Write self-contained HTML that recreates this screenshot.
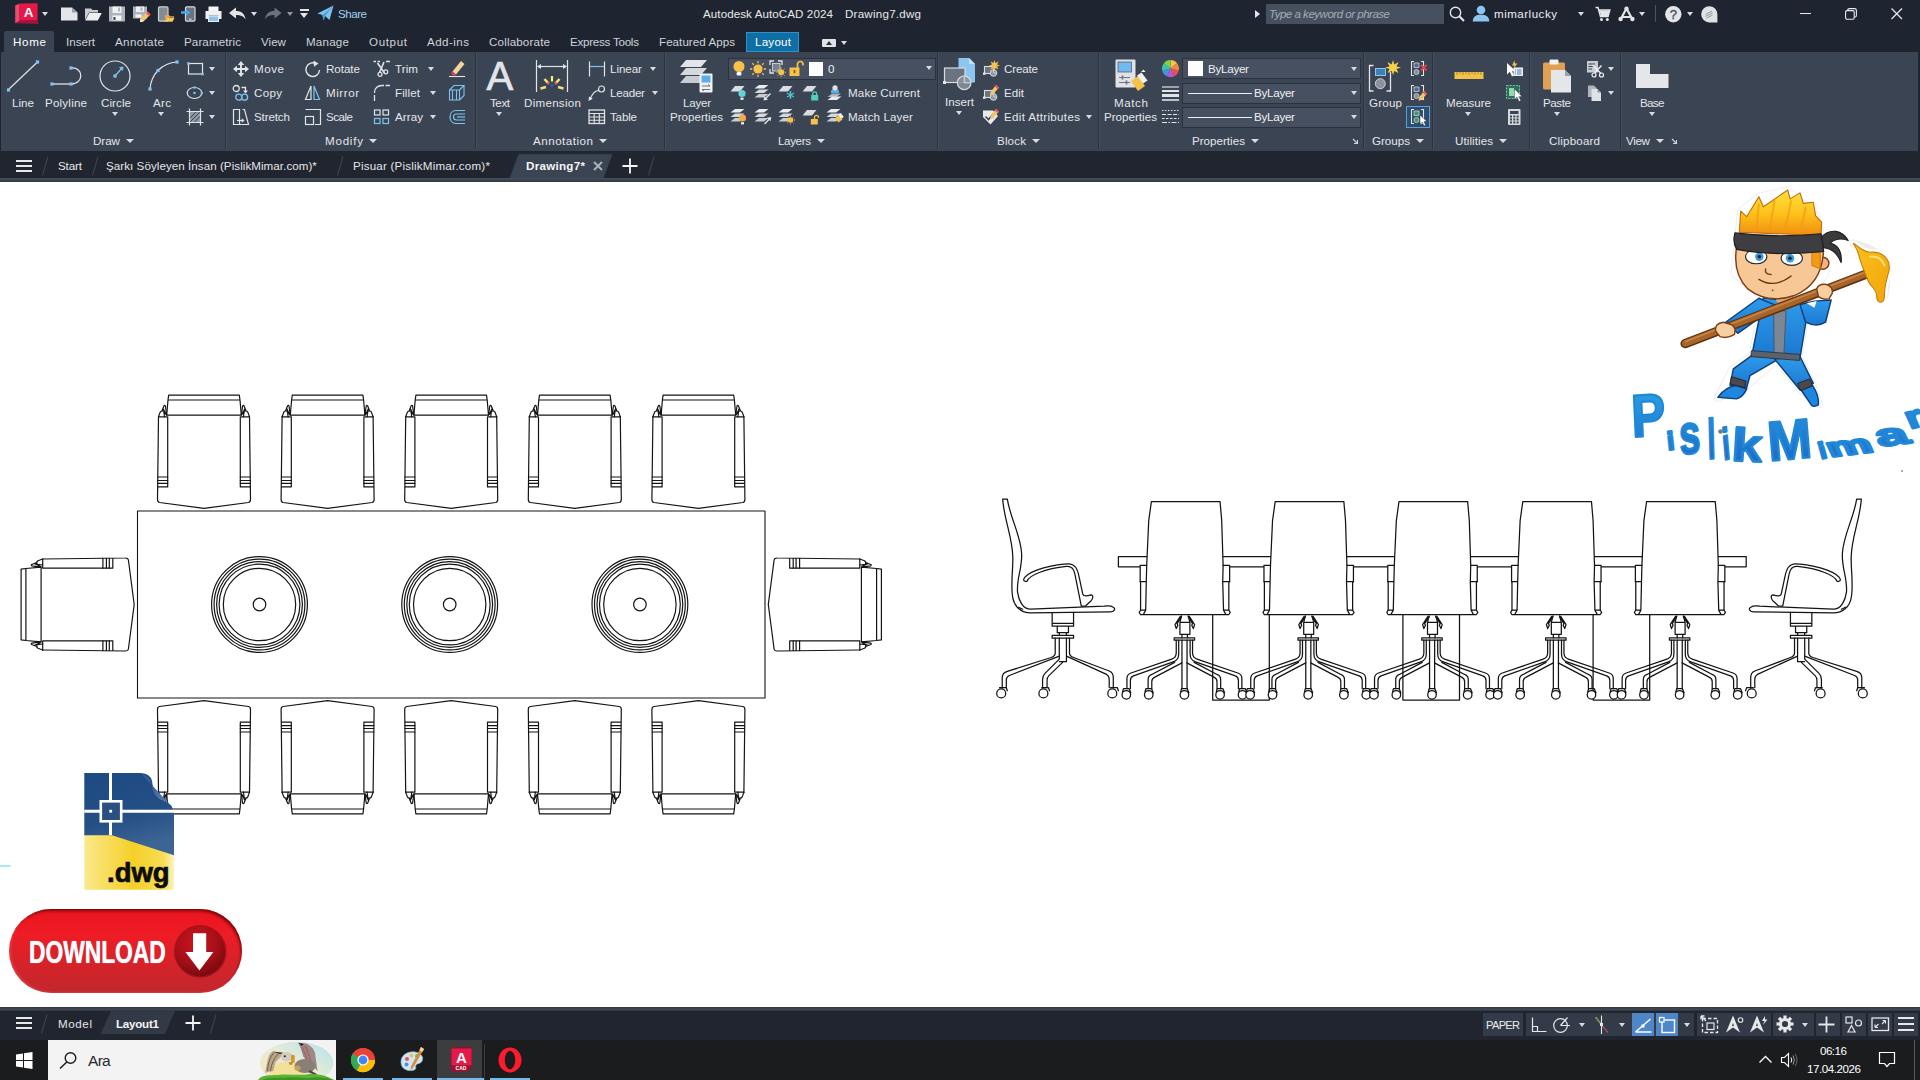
<!DOCTYPE html>
<html lang="en">
<head>
<meta charset="utf-8">
<title>Autodesk AutoCAD 2024 - Drawing7.dwg</title>
<style>
html,body{margin:0;padding:0}
body{width:1920px;height:1080px;overflow:hidden;background:#fff;position:relative;font-family:"Liberation Sans",sans-serif;font-size:12px;color:#e4e6ea}
.b{position:absolute}
.t{position:absolute;white-space:nowrap;line-height:16px;font-size:12px}
.i{position:absolute;overflow:visible}
.a{position:absolute;width:0;height:0;border-left:3.5px solid transparent;border-right:3.5px solid transparent;border-top:4px solid #d8dce2}
.sep{position:absolute;top:53px;width:1px;height:96px;background:#2a313d;box-shadow:1px 0 0 #454e5e}
.dd{position:absolute;background:#475060;border:1px solid #2b323e;box-sizing:border-box}
</style>
</head>
<body>
<div class="b" style="left:0;top:0;width:1920px;height:52px;background:#1f2530"></div>
<div class="b" style="left:0;top:52px;width:1920px;height:100px;background:#1f2530"></div>
<div class="b" style="left:1px;top:52px;width:1917px;height:99px;background:#3b4453"></div>
<div class="b" style="left:0;top:151px;width:1920px;height:27px;background:#20252f"></div>
<div class="b" style="left:0;top:178px;width:1920px;height:4px;background:linear-gradient(#47515c,#3b4550 50%,#2f3843)"></div>
<div class="b" style="left:0;top:1007px;width:1920px;height:4px;background:linear-gradient(#2c343e,#414953 55%,#2c343e)"></div>
<div class="b" style="left:0;top:1011px;width:1920px;height:29px;background:#20252f"></div>
<div class="b" style="left:0;top:1040px;width:1920px;height:40px;background:#1b1c1e"></div>
<div class="b" style="left:4px;top:31px;width:50px;height:21px;background:#3b4453;border-radius:2px 2px 0 0"></div>
<div class="b" style="left:746px;top:32px;width:53px;height:20px;background:#0f6ea3;border:1px solid #2a93cc;box-sizing:border-box"></div>
<span class="t" style="left:13.00px;top:34px;font-size:11.6px;letter-spacing:0.676px;color:#ffffff;">Home</span>
<span class="t" style="left:66.00px;top:34px;font-size:11.6px;letter-spacing:0.000px;color:#cfd3da;">Insert</span>
<span class="t" style="left:115.00px;top:34px;font-size:11.6px;letter-spacing:0.363px;color:#cfd3da;">Annotate</span>
<span class="t" style="left:184.00px;top:34px;font-size:11.6px;letter-spacing:0.102px;color:#cfd3da;">Parametric</span>
<span class="t" style="left:261.00px;top:34px;font-size:11.6px;letter-spacing:0.020px;color:#cfd3da;">View</span>
<span class="t" style="left:306.00px;top:34px;font-size:11.6px;letter-spacing:0.213px;color:#cfd3da;">Manage</span>
<span class="t" style="left:369.00px;top:34px;font-size:11.6px;letter-spacing:0.640px;color:#cfd3da;">Output</span>
<span class="t" style="left:427.00px;top:34px;font-size:11.6px;letter-spacing:0.446px;color:#cfd3da;">Add-ins</span>
<span class="t" style="left:489.00px;top:34px;font-size:11.6px;letter-spacing:0.167px;color:#cfd3da;">Collaborate</span>
<span class="t" style="left:570.00px;top:34px;font-size:11.6px;letter-spacing:-0.248px;color:#cfd3da;">Express Tools</span>
<span class="t" style="left:659.00px;top:34px;font-size:11.6px;letter-spacing:0.045px;color:#cfd3da;">Featured Apps</span>
<span class="t" style="left:755.00px;top:34px;font-size:11.6px;letter-spacing:0.228px;color:#ffffff;">Layout</span>
<div class="b" style="left:822px;top:39px;width:14px;height:8px;background:#dfe2e6;border-radius:1px"></div>
<i class="a" style="left:826px;top:41px;border-top:0;border-bottom:4px solid #2a303b;border-left-width:3px;border-right-width:3px"></i>
<i class="a" style="left:840.5px;top:41px;border-top-color:#d8dce2"></i>
<div class="sep" style="left:225px"></div>
<div class="sep" style="left:475px"></div>
<div class="sep" style="left:664px"></div>
<div class="sep" style="left:937px"></div>
<div class="sep" style="left:1098px"></div>
<div class="sep" style="left:1363px"></div>
<div class="sep" style="left:1432px"></div>
<div class="sep" style="left:1529px"></div>
<div class="sep" style="left:1620px"></div>
<span class="t" style="left:93.00px;top:133px;font-size:11.6px;letter-spacing:-0.029px;">Draw</span>
<i class="a" style="left:126px;top:139px;border-left-width:4px;border-right-width:4px;border-top-width:4.5px"></i>
<span class="t" style="left:325.00px;top:133px;font-size:11.6px;letter-spacing:0.768px;">Modify</span>
<i class="a" style="left:369px;top:139px;border-left-width:4px;border-right-width:4px;border-top-width:4.5px"></i>
<span class="t" style="left:533.00px;top:133px;font-size:11.6px;letter-spacing:0.506px;">Annotation</span>
<i class="a" style="left:599px;top:139px;border-left-width:4px;border-right-width:4px;border-top-width:4.5px"></i>
<span class="t" style="left:778.00px;top:133px;font-size:11.6px;letter-spacing:-0.360px;">Layers</span>
<i class="a" style="left:817px;top:139px;border-left-width:4px;border-right-width:4px;border-top-width:4.5px"></i>
<span class="t" style="left:997.00px;top:133px;font-size:11.6px;letter-spacing:0.145px;">Block</span>
<i class="a" style="left:1032px;top:139px;border-left-width:4px;border-right-width:4px;border-top-width:4.5px"></i>
<span class="t" style="left:1192.00px;top:133px;font-size:11.6px;letter-spacing:0.012px;">Properties</span>
<i class="a" style="left:1251px;top:139px;border-left-width:4px;border-right-width:4px;border-top-width:4.5px"></i>
<span class="t" style="left:1372.00px;top:133px;font-size:11.6px;letter-spacing:-0.010px;">Groups</span>
<i class="a" style="left:1416px;top:139px;border-left-width:4px;border-right-width:4px;border-top-width:4.5px"></i>
<span class="t" style="left:1455.00px;top:133px;font-size:11.6px;letter-spacing:0.074px;">Utilities</span>
<i class="a" style="left:1499px;top:139px;border-left-width:4px;border-right-width:4px;border-top-width:4.5px"></i>
<span class="t" style="left:1549.00px;top:133px;font-size:11.6px;letter-spacing:0.169px;">Clipboard</span>
<span class="t" style="left:1626.00px;top:133px;font-size:11.6px;letter-spacing:-0.313px;">View</span>
<i class="a" style="left:1656px;top:139px;border-left-width:4px;border-right-width:4px;border-top-width:4.5px"></i>
<svg class="i" style="left:1352px;top:138px" width="7" height="7" viewBox="0 0 7 7" ><path d="M1 1L5.5 5.5M5.5 2V5.5H2" fill="none" stroke="#cfd3da" stroke-width="1.1"/></svg>
<svg class="i" style="left:1671px;top:138px" width="7" height="7" viewBox="0 0 7 7" ><path d="M1 1L5.5 5.5M5.5 2V5.5H2" fill="none" stroke="#cfd3da" stroke-width="1.1"/></svg>
<svg class="i" style="left:14px;top:2px" width="26" height="23" viewBox="0 0 26 23" ><path d="M1.2 21.2L5.6 18.3L23.4 18L25 22Z" fill="#a8113a"/>
<path d="M1.2 3.6L5.6 1.5V18.5L1.2 21.2Z" fill="#ef4a6e"/>
<path d="M5.6 1.5L23.2 1.2Q23.6 1.2 23.6 1.8V18L5.6 18.5Z" fill="#e6174a"/>
<text x="14.5" y="14.8" font-family="Liberation Sans, sans-serif" font-weight="bold" font-size="13.5" fill="#fff" text-anchor="middle">A</text></svg>
<i class="a" style="left:42px;top:12px;border-top-color:#d8dce2"></i>
<svg class="i" style="left:61px;top:7px" width="17" height="14" viewBox="0 0 17 14" ><path d="M0 0.5H11L16.5 5.5V13.5H0Z" fill="#e3e5e8"/><path d="M11 0.5V5.5H16.5Z" fill="#9aa1ab"/></svg>
<svg class="i" style="left:85px;top:7px" width="17" height="14" viewBox="0 0 17 14" ><path d="M0 1.5H6L7.5 3H13V5.5H4L0 13Z" fill="#c9cdd3"/><path d="M4.2 6H16.8L12.8 13.5H0.3Z" fill="#eceef0"/></svg>
<svg class="i" style="left:109px;top:6px" width="17" height="16" viewBox="0 0 17 16" ><path d="M0 0.5H16V15.5H0Z" fill="#aeb4bd"/><rect x="3.5" y="0.5" width="9" height="6.5" fill="#eef0f2"/><rect x="9" y="1.5" width="2" height="4" fill="#aeb4bd"/><rect x="3.5" y="9.5" width="9" height="5" fill="#f4f5f6"/><rect x="4.5" y="11" width="2" height="3" fill="#3b4453"/></svg>
<svg class="i" style="left:133px;top:6px" width="18" height="16" viewBox="0 0 18 16" ><path d="M0 0.5H14V12.5H0Z" fill="#aeb4bd"/><rect x="3" y="0.5" width="8" height="5.5" fill="#eef0f2"/><rect x="7.5" y="1.5" width="2" height="3.5" fill="#aeb4bd"/><rect x="2.5" y="8.5" width="6" height="3" fill="#f4f5f6"/><path d="M14.5 5.5L17.5 8.5L10.5 15.5L7 16L7.6 12.5Z" fill="#f3c56b"/><path d="M14.5 5.5L17.5 8.5L16 10L13 7Z" fill="#e8505b"/><path d="M7 16L7.6 12.5L10.5 15.5Z" fill="#f1f1f1"/></svg>
<svg class="i" style="left:157px;top:6px" width="18" height="16" viewBox="0 0 18 16" ><rect x="1.5" y="0.8" width="9.5" height="14.4" rx="1.2" fill="#858b94" stroke="#c9cdd3" stroke-width="1.2"/><path d="M8 9H12L13 10.2H17V11.5H10.5L8 15.5Z" fill="#e0a93e"/><path d="M10.3 11.8H17.6L15.5 15.8H8Z" fill="#f6c560"/></svg>
<svg class="i" style="left:181px;top:6px" width="16" height="16" viewBox="0 0 16 16" ><rect x="4.5" y="0.8" width="9.5" height="14.4" rx="1.2" fill="#6c7380" stroke="#d5d8dd" stroke-width="1.2"/><rect x="8" y="12.6" width="2.5" height="1.2" fill="#d5d8dd"/><path d="M0 5.2H5V3L9.5 6.5L5 10V7.8H0Z" fill="#46a7e6"/></svg>
<svg class="i" style="left:205px;top:6px" width="17" height="16" viewBox="0 0 17 16" ><rect x="3.5" y="0.5" width="10" height="5" fill="#f4f5f6"/><path d="M0.5 5H16.5V13H13.5V9.5H3.5V13H0.5Z" fill="#eef0f2"/><rect x="3.5" y="10" width="10" height="5.5" fill="#8fc2ea" stroke="#eef0f2" stroke-width="1"/></svg>
<svg class="i" style="left:229px;top:7px" width="17" height="14" viewBox="0 0 17 14" ><path d="M0 6L7 0.5V4C12 4 16 6.5 16.5 12.5C14.5 9 11.5 8 7 8V11.5Z" fill="#e3e5e8"/></svg>
<i class="a" style="left:250.5px;top:12px;border-top-color:#d8dce2"></i>
<svg class="i" style="left:265px;top:7px" width="17" height="14" viewBox="0 0 17 14" ><path d="M16.5 6L9.5 0.5V4C4.5 4 0.5 6.5 0 12.5C2 9 5 8 9.5 8V11.5Z" fill="#6b7380"/></svg>
<i class="a" style="left:286.5px;top:12px;border-top-color:#8e959f"></i>
<div class="b" style="left:300px;top:9px;width:9px;height:2px;background:#e3e5e8"></div>
<i class="a" style="left:300px;top:13px;border-left-width:4.5px;border-right-width:4.5px;border-top-width:5px;border-top-color:#e3e5e8"></i>
<svg class="i" style="left:317px;top:5px" width="17" height="17" viewBox="0 0 17 17" ><path d="M0.5 8.5L16.5 0.5L12.5 15L8 11L6.5 15.5L5.5 10Z" fill="#7fc4ef"/><path d="M5.5 10L16.5 0.5L8 11L6.5 15.5Z" fill="#4b9fd6"/></svg>
<span class="t" style="left:338.00px;top:6px;font-size:11.6px;letter-spacing:-0.493px;color:#9fd0f0;">Share</span>
<span class="t" style="left:703.00px;top:6px;font-size:11.6px;letter-spacing:0.082px;color:#e6e8ea;">Autodesk AutoCAD 2024</span>
<span class="t" style="left:845.00px;top:6px;font-size:11.6px;letter-spacing:0.229px;color:#e6e8ea;">Drawing7.dwg</span>
<i class="a" style="left:1255px;top:10px;border:0;border-top:4px solid transparent;border-bottom:4px solid transparent;border-left:5px solid #e3e5e8"></i>
<div class="b" style="left:1266px;top:4px;width:178px;height:20px;background:#47505f"></div>
<span class="t" style="left:1269.00px;top:7px;font-size:11.5px;line-height:15.5px;letter-spacing:-0.482px;font-style:italic;color:#a3abb7;">Type a keyword or phrase</span>
<svg class="i" style="left:1449px;top:6px" width="16" height="16" viewBox="0 0 16 16" ><circle cx="6.5" cy="6.5" r="5.2" fill="none" stroke="#e3e5e8" stroke-width="1.4"/><path d="M10.3 10.3L15 15" stroke="#e3e5e8" stroke-width="2"/></svg>
<svg class="i" style="left:1472px;top:5px" width="18" height="17" viewBox="0 0 18 17" ><circle cx="9" cy="5" r="4.3" fill="#8cc6f0"/><path d="M0.8 16.5C0.8 11.5 4 9.8 9 9.8S17.2 11.5 17.2 16.5Z" fill="#8cc6f0"/></svg>
<span class="t" style="left:1494.00px;top:6px;font-size:11.6px;letter-spacing:0.485px;color:#eceef0;">mimarlucky</span>
<i class="a" style="left:1578px;top:12px;border-top-color:#d8dce2"></i>
<svg class="i" style="left:1595px;top:6px" width="16" height="16" viewBox="0 0 16 16" ><path d="M0.5 1.5H3L5.5 10.5H13L14.8 4H4" fill="none" stroke="#e3e5e8" stroke-width="1.5"/><path d="M4.5 4.5H14.5L13 10H6Z" fill="#e3e5e8"/><circle cx="6.5" cy="13.6" r="1.5" fill="#e3e5e8"/><circle cx="12.3" cy="13.6" r="1.5" fill="#e3e5e8"/></svg>
<svg class="i" style="left:1618px;top:6px" width="17" height="16" viewBox="0 0 17 16" ><path d="M8.5 2.5L2.5 13.5M8.5 2.5L14.5 13.5M4 11H13" fill="none" stroke="#e3e5e8" stroke-width="2.2"/><circle cx="8.5" cy="2.8" r="2.2" fill="#e3e5e8"/><circle cx="2.6" cy="13" r="2.2" fill="#e3e5e8"/><circle cx="14.4" cy="13" r="2.2" fill="#e3e5e8"/></svg>
<i class="a" style="left:1638.5px;top:12px;border-top-color:#d8dce2"></i>
<div class="b" style="left:1655px;top:5px;width:1px;height:17px;background:#4d5564"></div>
<svg class="i" style="left:1665px;top:6px" width="17" height="17" viewBox="0 0 17 17" ><circle cx="8.3" cy="8.3" r="8.2" fill="#e3e5e8"/><text x="8.3" y="13" font-family="Liberation Sans, sans-serif" font-size="13" text-anchor="middle" fill="#4a5260" stroke="#4a5260" stroke-width="0.4">?</text></svg>
<i class="a" style="left:1686.5px;top:12px;border-top-color:#d8dce2"></i>
<svg class="i" style="left:1701px;top:6px" width="17" height="17" viewBox="0 0 17 17" ><path d="M8.3 0.2A8.1 8.1 0 1 0 8.3 16.4H16.4V8.3A8.1 8.1 0 0 0 8.3 0.2Z" fill="#dfe2e5"/><path d="M4.5 8.5L11 5M4.5 10.5L11.5 6.8M5.5 12.2L11.5 9" stroke="#8b929c" stroke-width="0.9"/></svg>
<div class="b" style="left:1800px;top:13px;width:11px;height:1px;background:#e9ebee"></div>
<svg class="i" style="left:1845px;top:8px" width="12" height="12" viewBox="0 0 12 12" ><rect x="0.6" y="2.6" width="8.6" height="8.6" rx="1.5" fill="none" stroke="#e9ebee" stroke-width="1.1"/><path d="M2.8 2.4V2Q2.8 0.6 4.2 0.6H9.6Q11.4 0.6 11.4 2.4V7.6Q11.4 9.2 9.8 9.2H9.4" fill="none" stroke="#e9ebee" stroke-width="1.1"/></svg>
<svg class="i" style="left:1891px;top:8px" width="12" height="12" viewBox="0 0 12 12" ><path d="M0.5 0.5L11 11M11 0.5L0.5 11" stroke="#e9ebee" stroke-width="1.2"/></svg>
<svg class="i" style="left:0px;top:52px" width="48" height="50" viewBox="0 0 48 50" ><path d="M8.5 37.5L37 10.5" stroke="#e1e4e8" stroke-width="1.2"/><rect x="6.9" y="36.4" width="3.2" height="3.2" fill="#7cc4ee"/><rect x="35.9" y="8.4" width="3.2" height="3.2" fill="#7cc4ee"/></svg>
<span class="t" style="left:12.00px;top:95px;font-size:11.6px;letter-spacing:0.025px;">Line</span>
<svg class="i" style="left:40px;top:52px" width="50" height="50" viewBox="0 0 50 50" ><path d="M12 32H31" stroke="#e1e4e8" stroke-width="1.3"/><path d="M31 16C44 15 44 32 31 32" fill="none" stroke="#e1e4e8" stroke-width="1.3"/><rect x="10.4" y="30.4" width="3.2" height="3.2" fill="#7cc4ee"/><rect x="29.4" y="30.4" width="3.2" height="3.2" fill="#7cc4ee"/><rect x="29.4" y="14.4" width="3.2" height="3.2" fill="#7cc4ee"/></svg>
<span class="t" style="left:45.00px;top:95px;font-size:11.6px;letter-spacing:0.200px;">Polyline</span>
<svg class="i" style="left:95px;top:52px" width="40" height="50" viewBox="0 0 40 50" ><circle cx="20" cy="24" r="15" fill="none" stroke="#e1e4e8" stroke-width="1.2"/><path d="M20 24L27 16" stroke="#7cc4ee" stroke-width="1.3"/><path d="M28.5 14.5L27.8 19L24 15.2Z" fill="#7cc4ee"/><rect x="18.4" y="22.4" width="3.2" height="3.2" fill="#7cc4ee"/></svg>
<span class="t" style="left:101.00px;top:95px;font-size:11.6px;letter-spacing:0.072px;">Circle</span>
<i class="a" style="left:111.5px;top:112px;border-top-color:#d8dce2"></i>
<svg class="i" style="left:140px;top:52px" width="45" height="50" viewBox="0 0 45 50" ><path d="M10 37C11 22 22 11 37 10" fill="none" stroke="#e1e4e8" stroke-width="1.2"/><rect x="8.4" y="35.4" width="3.2" height="3.2" fill="#7cc4ee"/><rect x="16.4" y="16.9" width="3.2" height="3.2" fill="#7cc4ee"/><rect x="35.4" y="8.4" width="3.2" height="3.2" fill="#7cc4ee"/></svg>
<span class="t" style="left:153.00px;top:95px;font-size:11.6px;letter-spacing:0.300px;">Arc</span>
<i class="a" style="left:157.5px;top:112px;border-top-color:#d8dce2"></i>
<svg class="i" style="left:187px;top:61px" width="18" height="16" viewBox="0 0 18 16" ><rect x="1.5" y="2.5" width="14" height="10.5" fill="none" stroke="#e1e4e8" stroke-width="1.2"/><rect x="0.2" y="1.2" width="2.6" height="2.6" fill="#7cc4ee"/><rect x="14.2" y="11.7" width="2.6" height="2.6" fill="#7cc4ee"/></svg>
<i class="a" style="left:209px;top:67px;border-top-color:#d8dce2"></i>
<svg class="i" style="left:186px;top:85px" width="18" height="16" viewBox="0 0 18 16" ><ellipse cx="8.5" cy="8" rx="7.3" ry="5.5" fill="none" stroke="#e1e4e8" stroke-width="1.2"/><rect x="7.4" y="6.9" width="2.2" height="2.2" fill="#7cc4ee"/><rect x="7.4" y="1.4" width="2.2" height="2.2" fill="#7cc4ee"/><rect x="14.7" y="6.9" width="2.2" height="2.2" fill="#7cc4ee"/></svg>
<i class="a" style="left:209px;top:91px;border-top-color:#d8dce2"></i>
<svg class="i" style="left:186px;top:108px" width="18" height="18" viewBox="0 0 18 18" ><rect x="3.5" y="3.5" width="11" height="11" fill="#8d96a3"/><path d="M4 10L10 4M4 14L14 4M8 14.5L14.5 8" stroke="#3b4453" stroke-width="1"/><path d="M3.5 0.5V17.5M14.5 0.5V17.5M0.5 3.5H17.5M0.5 14.5H17.5" stroke="#e1e4e8" stroke-width="1.2"/></svg>
<i class="a" style="left:209px;top:115px;border-top-color:#d8dce2"></i>
<svg class="i" style="left:232.5px;top:60.5px" width="17" height="17" viewBox="0 0 17 17" ><path d="M8 2V14M2 8H14" stroke="#e1e4e8" stroke-width="1.9"/><path d="M8 0L11.2 4H4.8ZM8 16L11.2 12H4.8ZM0 8L4 4.8V11.2ZM16 8L12 4.8V11.2Z" fill="#e1e4e8"/></svg>
<span class="t" style="left:254.00px;top:61px;font-size:11.6px;letter-spacing:0.546px;">Move</span>
<svg class="i" style="left:232px;top:84px" width="18" height="18" viewBox="0 0 18 18" ><circle cx="4.2" cy="4.5" r="3" fill="none" stroke="#e1e4e8" stroke-width="1.3"/><path d="M9.5 3.5H13.5V7" fill="none" stroke="#e1e4e8" stroke-width="1.3"/><path d="M13.5 9.5L11 6.5H16Z" fill="#e1e4e8"/><circle cx="6.8" cy="13.2" r="3" fill="none" stroke="#7cc4ee" stroke-width="1.3"/><circle cx="12.6" cy="13.2" r="3" fill="none" stroke="#7cc4ee" stroke-width="1.3"/></svg>
<span class="t" style="left:254.00px;top:85px;font-size:11.6px;letter-spacing:0.305px;">Copy</span>
<svg class="i" style="left:232px;top:108px" width="18" height="18" viewBox="0 0 18 18" ><path d="M1.5 1.5H7.5V16.5H1.5Z" fill="none" stroke="#e1e4e8" stroke-width="1.2"/><path d="M10.5 1.5H12.5L16.5 16.5H7.5" fill="none" stroke="#e1e4e8" stroke-width="1.2"/><path d="M5 12.5H11" stroke="#e1e4e8" stroke-width="1.2"/><path d="M12.5 12.5L9.8 10.3V14.7Z" fill="#e1e4e8"/></svg>
<span class="t" style="left:254.00px;top:109px;font-size:11.6px;letter-spacing:-0.129px;">Stretch</span>
<svg class="i" style="left:304px;top:60px" width="18" height="18" viewBox="0 0 18 18" ><path d="M12.5 4A6.8 6.8 0 1 0 15.5 10" fill="none" stroke="#e1e4e8" stroke-width="1.4"/><path d="M9.5 0.5L14.5 3.5L10 6.8Z" fill="#e1e4e8"/></svg>
<span class="t" style="left:326.00px;top:61px;font-size:11.6px;letter-spacing:-0.032px;">Rotate</span>
<svg class="i" style="left:304px;top:84px" width="18" height="18" viewBox="0 0 18 18" ><path d="M7 2V15.5H1.5Z" fill="none" stroke="#e1e4e8" stroke-width="1.2"/><path d="M10 2V15.5H15.5Z" fill="none" stroke="#7cc4ee" stroke-width="1.2"/></svg>
<span class="t" style="left:326.00px;top:85px;font-size:11.6px;letter-spacing:0.545px;">Mirror</span>
<svg class="i" style="left:304px;top:108px" width="18" height="18" viewBox="0 0 18 18" ><path d="M1.5 1.5H16.5V16.5H11" fill="none" stroke="#e1e4e8" stroke-width="1.2"/><rect x="1.5" y="8.5" width="8" height="8" fill="none" stroke="#e1e4e8" stroke-width="1.2"/></svg>
<span class="t" style="left:326.00px;top:109px;font-size:11.6px;letter-spacing:-0.500px;">Scale</span>
<svg class="i" style="left:373px;top:60px" width="18" height="18" viewBox="0 0 18 18" ><path d="M0.5 1.5H3M4.5 1.5H7M13 1.5H17" stroke="#e1e4e8" stroke-width="1.3"/><path d="M4.5 3L11.5 13M11 2L6.5 12.5" stroke="#e1e4e8" stroke-width="1.6"/><circle cx="7" cy="14.3" r="2" fill="none" stroke="#e1e4e8" stroke-width="1.2"/><circle cx="12.8" cy="11.8" r="2" fill="none" stroke="#e1e4e8" stroke-width="1.2"/></svg>
<span class="t" style="left:395.00px;top:61px;font-size:11.6px;letter-spacing:0.088px;">Trim</span>
<i class="a" style="left:427.5px;top:67px;border-top-color:#d8dce2"></i>
<svg class="i" style="left:373px;top:84px" width="18" height="18" viewBox="0 0 18 18" ><path d="M1.5 17V11M1.5 9V8.5C1.5 4 5 1.5 9 1.5H11M12.5 1.5H17" fill="none" stroke="#e1e4e8" stroke-width="1.3"/></svg>
<span class="t" style="left:395.00px;top:85px;font-size:11.6px;letter-spacing:0.105px;">Fillet</span>
<i class="a" style="left:429.5px;top:91px;border-top-color:#d8dce2"></i>
<svg class="i" style="left:373px;top:108px" width="18" height="18" viewBox="0 0 18 18" ><rect x="1.5" y="2" width="5.5" height="5" fill="none" stroke="#e1e4e8" stroke-width="1.2"/><rect x="10" y="2" width="5.5" height="5" fill="none" stroke="#e1e4e8" stroke-width="1.2"/><rect x="1.5" y="10.5" width="5.5" height="5" fill="none" stroke="#7cc4ee" stroke-width="1.2"/><rect x="10" y="10.5" width="5.5" height="5" fill="none" stroke="#7cc4ee" stroke-width="1.2"/></svg>
<span class="t" style="left:395.00px;top:109px;font-size:11.6px;letter-spacing:0.069px;">Array</span>
<i class="a" style="left:429.5px;top:115px;border-top-color:#d8dce2"></i>
<svg class="i" style="left:448px;top:60px" width="18" height="18" viewBox="0 0 18 18" ><path d="M13 1L16.5 4L8 14.5L4.5 11.5Z" fill="#f3d59a"/><path d="M4.5 11.5L8 14.5L6.3 16L2.8 13.5Z" fill="#e8404f"/><path d="M1 16.5H17" stroke="#e1e4e8" stroke-width="1.1"/></svg>
<svg class="i" style="left:448px;top:84px" width="18" height="18" viewBox="0 0 18 18" ><path d="M1.5 6H11.5V16H1.5ZM1.5 6L6 1.5H16L11.5 6M16 1.5V11.5L11.5 16M4.5 6V16M8.5 6V16" fill="none" stroke="#7cc4ee" stroke-width="1.1"/></svg>
<svg class="i" style="left:448px;top:108px" width="18" height="18" viewBox="0 0 18 18" ><path d="M17 2.5H8C0 2.5 0 15.5 8 15.5H17" fill="none" stroke="#7cc4ee" stroke-width="1.2"/><path d="M17 6H8.5C4.5 6 4.5 12 8.5 12H17" fill="none" stroke="#7cc4ee" stroke-width="1.2"/><path d="M17 9H9" stroke="#7cc4ee" stroke-width="1.2"/></svg>
<span class="t" style="left:486.5px;top:54px;font-size:40px;line-height:44px;color:#e1e4e8;letter-spacing:0;-webkit-text-stroke:0.7px #e1e4e8">A</span>
<span class="t" style="left:490.00px;top:95px;font-size:11.6px;letter-spacing:-0.429px;">Text</span>
<i class="a" style="left:495.5px;top:112px;border-top-color:#d8dce2"></i>
<svg class="i" style="left:533px;top:58px" width="38" height="36" viewBox="0 0 38 36" ><path d="M3.5 2V34M34.5 2V34" stroke="#e1e4e8" stroke-width="1.2"/><path d="M5 8.5H33" stroke="#e1e4e8" stroke-width="1.2"/><path d="M4 8.5L8 6V11ZM34 8.5L30 6V11Z" fill="#e1e4e8"/><g transform="translate(0 2)"><path d="M19 16V21.5" stroke="#eef08a" stroke-width="2.2"/><path d="M11.5 19L15.5 23.5M26.5 19L22.5 23.5" stroke="#f2e27a" stroke-width="2.6"/><path d="M7.5 28.5L13 27M30.5 28.5L25 27" stroke="#f2e27a" stroke-width="2.4"/><path d="M14.5 22.5L16 24.2M23.5 22.5L22 24.2" stroke="#e8505b" stroke-width="2.2"/><circle cx="19" cy="25.5" r="1.6" fill="#3457c8"/></g></svg>
<span class="t" style="left:524.00px;top:95px;font-size:11.6px;letter-spacing:0.274px;">Dimension</span>
<svg class="i" style="left:587px;top:60px" width="20" height="18" viewBox="0 0 20 18" ><path d="M2.5 1.5V16.5M17.5 1.5V16.5" stroke="#e1e4e8" stroke-width="1.2"/><path d="M3 6.5H17" stroke="#7cc4ee" stroke-width="1.2"/></svg>
<span class="t" style="left:610.00px;top:61px;font-size:11.6px;letter-spacing:-0.050px;">Linear</span>
<i class="a" style="left:649.5px;top:67px;border-top-color:#d8dce2"></i>
<svg class="i" style="left:587px;top:84px" width="20" height="18" viewBox="0 0 20 18" ><circle cx="14.5" cy="5" r="3" fill="none" stroke="#e1e4e8" stroke-width="1.2"/><path d="M11.8 6.5C7 7 5.5 10 3 15" fill="none" stroke="#e1e4e8" stroke-width="1.2"/><path d="M1.5 17L2 12.5L5.8 14.8Z" fill="#e1e4e8"/></svg>
<span class="t" style="left:610.00px;top:85px;font-size:11.6px;letter-spacing:-0.227px;">Leader</span>
<i class="a" style="left:651.5px;top:91px;border-top-color:#d8dce2"></i>
<svg class="i" style="left:588px;top:109px" width="18" height="16" viewBox="0 0 18 16" ><rect x="1" y="1" width="15.5" height="13.5" fill="none" stroke="#e1e4e8" stroke-width="1.3"/><path d="M1 4.5H16.5M1 8H16.5M1 11.3H16.5M6.2 4.5V14.5M11.3 4.5V14.5" stroke="#e1e4e8" stroke-width="1.1"/></svg>
<span class="t" style="left:610.00px;top:109px;font-size:11.6px;letter-spacing:-0.181px;">Table</span>
<svg class="i" style="left:680px;top:59px" width="36" height="35" viewBox="0 0 36 35" ><path d="M6 17H27L21 24H0Z" fill="#c9cdd3"/><path d="M6 9H27L21 16H0Z" fill="#d5d8dd"/><path d="M6 1H27L21 8H0Z" fill="#e1e4e8"/><rect x="19.5" y="14.5" width="13" height="19" rx="1" fill="#f1f2f4"/><rect x="21.5" y="16.5" width="9" height="7" fill="#5aaef0"/><path d="M22 27H30M30 27L28 25.5M22 30.5H30M22 30.5L24 32" stroke="#6b7380" stroke-width="1" fill="none"/></svg>
<span class="t" style="left:683.00px;top:95px;font-size:11.6px;letter-spacing:-0.250px;">Layer</span>
<span class="t" style="left:670.00px;top:109px;font-size:11.6px;letter-spacing:0.012px;">Properties</span>
<div class="dd" style="left:728px;top:58px;width:208px;height:22px"></div>
<svg class="i" style="left:732px;top:60px" width="15" height="18" viewBox="0 0 15 18" ><circle cx="7" cy="6.5" r="5.5" fill="#f6c24a"/><rect x="4.6" y="12" width="4.8" height="3.6" rx="1" fill="#f4f5f6"/></svg>
<svg class="i" style="left:749px;top:60px" width="18" height="18" viewBox="0 0 18 18" ><circle cx="9" cy="9" r="4.6" fill="#f6c24a"/><path d="M9 1V3.2M9 14.8V17M1 9H3.2M14.8 9H17M3.3 3.3L4.9 4.9M13.1 13.1L14.7 14.7M3.3 14.7L4.9 13.1M13.1 4.9L14.7 3.3" stroke="#f6c24a" stroke-width="1.3"/></svg>
<svg class="i" style="left:769px;top:60px" width="18" height="18" viewBox="0 0 18 18" ><path d="M1 5V1H5M9 1H13V5M1 9V13H5" fill="none" stroke="#e1e4e8" stroke-width="1.3"/><rect x="3.5" y="3.5" width="7.5" height="7.5" fill="#7a8290" stroke="#e1e4e8" stroke-width="0.8"/><circle cx="12.2" cy="12.2" r="3" fill="#f6c24a"/><path d="M12.2 7.5V8.6M12.2 15.8V16.9M7.5 12.2H8.6M15.8 12.2H16.9M8.9 8.9L9.7 9.7M14.7 14.7L15.5 15.5M8.9 15.5L9.7 14.7M14.7 9.7L15.5 8.9" stroke="#f6c24a" stroke-width="1"/></svg>
<svg class="i" style="left:788px;top:59px" width="17" height="19" viewBox="0 0 17 19" ><path d="M9.5 9V5.5C9.5 1.5 15 1.5 15 5.5V6.5" fill="none" stroke="#f6c24a" stroke-width="1.7"/><rect x="1.5" y="8.5" width="10" height="8.5" fill="#f6c24a"/><rect x="5.7" y="11" width="1.6" height="3.2" fill="#6b5a2a"/></svg>
<div class="b" style="left:809px;top:62px;width:14px;height:14px;background:#fdfdfd"></div>
<span class="t" style="left:828.00px;top:61px;font-size:11.6px;color:#f0f1f3;">0</span>
<i class="a" style="left:925.5px;top:66px;border-top-color:#d8dce2"></i>
<svg class="i" style="left:730px;top:84px" width="18" height="18" viewBox="0 0 18 18" ><path d="M5 2H14.5L10 7.5H0.5Z" fill="#d9dce1"/><circle cx="12" cy="9.5" r="3.6" fill="#63d3d3"/><rect x="10.5" y="13.6" width="3" height="2.2" fill="#f1f2f4"/></svg>
<svg class="i" style="left:754px;top:84px" width="18" height="18" viewBox="0 0 18 18" ><path d="M5 10H14.5L10 13.4H0.5Z" fill="#c9cdd3"/><path d="M5 5.5H14.5L10 8.9H0.5Z" fill="#d5d8dd"/><path d="M5 1H14.5L10 4.4H0.5Z" fill="#e8eaed"/><path d="M16.5 9.5L11 15" stroke="#e1e4e8" stroke-width="1.4"/><path d="M9.5 16.5L10.3 12.2L14 15.7Z" fill="#e1e4e8"/></svg>
<svg class="i" style="left:778px;top:84px" width="18" height="18" viewBox="0 0 18 18" ><path d="M5 2H14.5L10 7.5H0.5Z" fill="#d9dce1"/><path d="M12.5 7V15M9 9L16 13M9 13L16 9" stroke="#49c6d6" stroke-width="1.4"/></svg>
<svg class="i" style="left:802px;top:84px" width="18" height="18" viewBox="0 0 18 18" ><path d="M5 2H14.5L10 7.5H0.5Z" fill="#d9dce1"/><path d="M10.8 11.5V9.6C10.8 7.2 14.6 7.2 14.6 9.6V11.5" fill="none" stroke="#4fd0b8" stroke-width="1.3"/><rect x="9.2" y="11" width="7" height="5.5" fill="#4fd0b8"/></svg>
<svg class="i" style="left:826px;top:84px" width="18" height="18" viewBox="0 0 18 18" ><path d="M6 9.5H15L10.5 13H1.5Z" fill="#aeb4bd"/><path d="M6 12.5H15.5L11 16H1.5Z" fill="#e8eaed"/><path d="M5 7.5C5 3.5 13 3.5 13 7.5V9H5Z" fill="#5aaef0"/><circle cx="9" cy="3.8" r="2.6" fill="#dfe2e6"/></svg>
<svg class="i" style="left:730px;top:108px" width="18" height="18" viewBox="0 0 18 18" ><path d="M5 10H14.5L10 13.4H0.5Z" fill="#c9cdd3"/><path d="M5 5.5H14.5L10 8.9H0.5Z" fill="#d5d8dd"/><path d="M5 1H14.5L10 4.4H0.5Z" fill="#e8eaed"/><circle cx="12.5" cy="10" r="3.6" fill="#f6a94a"/><rect x="11" y="14.2" width="3" height="2.2" fill="#f1f2f4"/></svg>
<svg class="i" style="left:754px;top:108px" width="18" height="18" viewBox="0 0 18 18" ><path d="M5 10H14.5L10 13.4H0.5Z" fill="#c9cdd3"/><path d="M5 5.5H14.5L10 8.9H0.5Z" fill="#d5d8dd"/><path d="M5 1H14.5L10 4.4H0.5Z" fill="#e8eaed"/><path d="M10.5 16L16 10.5" stroke="#e1e4e8" stroke-width="1.4"/><path d="M17.3 9L16.5 13.3L12.8 9.8Z" fill="#e1e4e8"/></svg>
<svg class="i" style="left:778px;top:108px" width="18" height="18" viewBox="0 0 18 18" ><path d="M5 10H14.5L10 13.4H0.5Z" fill="#c9cdd3"/><path d="M5 5.5H14.5L10 8.9H0.5Z" fill="#d5d8dd"/><path d="M5 1H14.5L10 4.4H0.5Z" fill="#e8eaed"/><circle cx="12.5" cy="12" r="2.8" fill="#f6c24a"/><path d="M12.5 7.5V8.4M12.5 15.6V16.5M8 12H8.9M16.1 12H17M9.3 8.8L10 9.5M15 14.5L15.7 15.2M9.3 15.2L10 14.5M15 9.5L15.7 8.8" stroke="#f6c24a" stroke-width="1"/></svg>
<svg class="i" style="left:802px;top:108px" width="18" height="18" viewBox="0 0 18 18" ><path d="M5 2H14.5L10 7.5H0.5Z" fill="#d9dce1"/><path d="M12.5 11.5V9.3C12.5 6.8 16.4 6.8 16.4 9.3V10" fill="none" stroke="#f6c24a" stroke-width="1.3"/><rect x="8.8" y="11" width="7" height="5.5" fill="#f6c24a"/></svg>
<svg class="i" style="left:826px;top:108px" width="18" height="18" viewBox="0 0 18 18" ><path d="M5 10H14.5L10 13.4H0.5Z" fill="#c9cdd3"/><path d="M5 5.5H14.5L10 8.9H0.5Z" fill="#d5d8dd"/><path d="M5 1H14.5L10 4.4H0.5Z" fill="#e8eaed"/><path d="M9 10L13 7L16.5 11.5L12.5 14.5Z" fill="#f6c24a"/><path d="M12.2 6.8L14.8 5L17.8 9L15.2 10.8Z" fill="#f1f2f4"/></svg>
<span class="t" style="left:848.00px;top:85px;font-size:11.6px;letter-spacing:0.155px;">Make Current</span>
<span class="t" style="left:848.00px;top:109px;font-size:11.6px;letter-spacing:0.114px;">Match Layer</span>
<svg class="i" style="left:942px;top:57px" width="35" height="35" viewBox="0 0 35 35" ><path d="M16.5 1H27L33 7V25.5H16.5Z" fill="#8cc6f0"/><path d="M27 1V7H33Z" fill="#c4e2f8"/><rect x="2.5" y="11" width="20.5" height="14.5" fill="#6b7380" stroke="#d9dce1" stroke-width="1.2"/><rect x="1" y="24" width="3" height="3" fill="#e1e4e8"/><circle cx="22.2" cy="25.8" r="6.8" fill="#8b929c" fill-opacity="0.85" stroke="#d9dce1" stroke-width="1.2"/><path d="M22.2 19V25.8H29" fill="none" stroke="#d9dce1" stroke-width="1"/></svg>
<span class="t" style="left:945.00px;top:94px;font-size:11.6px;letter-spacing:0.000px;">Insert</span>
<i class="a" style="left:955.5px;top:111px;border-top-color:#d8dce2"></i>
<svg class="i" style="left:982px;top:60px" width="18" height="18" viewBox="0 0 18 18" ><rect x="2.5" y="6.5" width="9.5" height="7" fill="#6b7380" stroke="#d9dce1" stroke-width="1.1"/><rect x="1" y="12.5" width="2.4" height="2.4" fill="#e1e4e8"/><circle cx="11.5" cy="13" r="3.3" fill="#8b929c" stroke="#d9dce1" stroke-width="1"/><path d="M11.5 9.7V13H14.8" fill="none" stroke="#d9dce1" stroke-width="0.8"/><path d="M12.5 0L13.5 3L16.5 1.5L15 4.5L18 5.5L15 6.5L16.5 9.5L13.5 8L12.5 11L11.5 8L8.5 9.5L10 6.5L7 5.5L10 4.5L8.5 1.5L11.5 3Z" fill="#f6c24a"/></svg>
<span class="t" style="left:1004.00px;top:61px;font-size:11.6px;letter-spacing:-0.160px;">Create</span>
<svg class="i" style="left:982px;top:84px" width="18" height="18" viewBox="0 0 18 18" ><rect x="2.5" y="6.5" width="9.5" height="7" fill="#6b7380" stroke="#d9dce1" stroke-width="1.1"/><rect x="1" y="12.5" width="2.4" height="2.4" fill="#e1e4e8"/><circle cx="11.5" cy="13" r="3.3" fill="#8b929c" stroke="#d9dce1" stroke-width="1"/><path d="M11.5 9.7V13H14.8" fill="none" stroke="#d9dce1" stroke-width="0.8"/><path d="M14 1L17 3.5L11 10.5L8 11.2L8.5 8Z" fill="#f3c56b"/><path d="M14 1L17 3.5L15.8 5L12.8 2.5Z" fill="#e8505b"/></svg>
<span class="t" style="left:1004.00px;top:85px;font-size:11.6px;letter-spacing:-0.003px;">Edit</span>
<svg class="i" style="left:982px;top:108px" width="18" height="18" viewBox="0 0 18 18" ><path d="M1 2.5H11L16 8L8.5 16.5L1 9Z" fill="#e8eaed"/><path d="M3.5 8.5L6.5 11.5L11.5 5.5" fill="none" stroke="#3b4453" stroke-width="1.6"/><path d="M14 1L17 3.5L11 10.5L8 11.2L8.5 8Z" fill="#f3c56b"/><path d="M14 1L17 3.5L15.8 5L12.8 2.5Z" fill="#e8505b"/></svg>
<span class="t" style="left:1004.00px;top:109px;font-size:11.6px;letter-spacing:0.316px;">Edit Attributes</span>
<i class="a" style="left:1085.5px;top:115px;border-top-color:#d8dce2"></i>
<svg class="i" style="left:1114px;top:58px" width="36" height="36" viewBox="0 0 36 36" ><rect x="1.5" y="1.5" width="20" height="28" rx="1" fill="#dfe2e6"/><rect x="4" y="4" width="13.5" height="10" fill="#6fbaf2" stroke="#5a6270" stroke-width="0.8"/><path d="M5 19.5H16M5 24.5H16" stroke="#6b7380" stroke-width="1"/><path d="M8.5 17.5V21.5M12.5 22.5V26.5" stroke="#6b7380" stroke-width="1.6"/><path d="M17 23L24 18L31 28L24 33Z" fill="#f6c24a"/><path d="M23 17.5L27.5 14.5L33.5 22.5L29 25.5Z" fill="#f1f2f4"/><path d="M27 14L29.5 11.5L31.5 14Z" fill="#f1f2f4"/></svg>
<span class="t" style="left:1114.00px;top:95px;font-size:11.6px;letter-spacing:0.598px;">Match</span>
<span class="t" style="left:1104.00px;top:109px;font-size:11.6px;letter-spacing:0.012px;">Properties</span>
<svg class="i" style="left:1162px;top:60px" width="17" height="17" viewBox="0 0 17 17" ><path d="M8.5 8.5L8.50 0.00A8.5 8.5 0 0 1 15.15 3.20Z" fill="#f6c24a"/><path d="M8.5 8.5L15.15 3.20A8.5 8.5 0 0 1 16.79 10.39Z" fill="#f08a3c"/><path d="M8.5 8.5L16.79 10.39A8.5 8.5 0 0 1 12.19 16.16Z" fill="#e8505b"/><path d="M8.5 8.5L12.19 16.16A8.5 8.5 0 0 1 4.81 16.16Z" fill="#b05ad6"/><path d="M8.5 8.5L4.81 16.16A8.5 8.5 0 0 1 0.21 10.39Z" fill="#4a90e2"/><path d="M8.5 8.5L0.21 10.39A8.5 8.5 0 0 1 1.85 3.20Z" fill="#3cc6a8"/><path d="M8.5 8.5L1.85 3.20A8.5 8.5 0 0 1 8.50 0.00Z" fill="#7bd34f"/></svg>
<svg class="i" style="left:1162px;top:85px" width="18" height="17" viewBox="0 0 18 17" ><path d="M0 2H17" stroke="#e1e4e8" stroke-width="1.2"/><path d="M0 6H17" stroke="#e1e4e8" stroke-width="2"/><path d="M0 10.5H17" stroke="#e1e4e8" stroke-width="3"/><path d="M0 15H17" stroke="#e1e4e8" stroke-width="1.6"/></svg>
<svg class="i" style="left:1162px;top:109px" width="18" height="16" viewBox="0 0 18 16" ><path d="M0 1.5H17" stroke="#e1e4e8" stroke-width="1.2" stroke-dasharray="1.5 1.5"/><path d="M0 5.5H17" stroke="#e1e4e8" stroke-width="1.2" stroke-dasharray="4 1.5"/><path d="M0 9.5H17" stroke="#e1e4e8" stroke-width="1.2" stroke-dasharray="2.5 1.5"/><path d="M0 13.5H17" stroke="#e1e4e8" stroke-width="1.2" stroke-dasharray="5 1.5 1.5 1.5"/></svg>
<div class="dd" style="left:1182px;top:58px;width:179px;height:21px"></div>
<i class="a" style="left:1350.5px;top:67px;border-top-color:#d8dce2"></i>
<div class="dd" style="left:1182px;top:82.5px;width:179px;height:21px"></div>
<i class="a" style="left:1350.5px;top:91px;border-top-color:#d8dce2"></i>
<div class="dd" style="left:1182px;top:106.5px;width:179px;height:21px"></div>
<i class="a" style="left:1350.5px;top:115px;border-top-color:#d8dce2"></i>
<div class="b" style="left:1188px;top:61px;width:15px;height:15px;background:#fdfdfd"></div>
<span class="t" style="left:1208.00px;top:61px;font-size:11.6px;letter-spacing:-0.262px;color:#f0f1f3;">ByLayer</span>
<div class="b" style="left:1188px;top:92.5px;width:64px;height:1px;background:#f0f1f3"></div>
<span class="t" style="left:1254.00px;top:85px;font-size:11.6px;letter-spacing:-0.262px;color:#f0f1f3;">ByLayer</span>
<div class="b" style="left:1188px;top:116.5px;width:64px;height:1px;background:#f0f1f3"></div>
<span class="t" style="left:1254.00px;top:109px;font-size:11.6px;letter-spacing:-0.262px;color:#f0f1f3;">ByLayer</span>
<svg class="i" style="left:1368px;top:58px" width="34" height="36" viewBox="0 0 34 36" ><path d="M5.5 7.5H1.5V33H5.5M18.5 33H22.5V14" fill="none" stroke="#e1e4e8" stroke-width="1.3"/><rect x="7.5" y="10.5" width="10" height="7" fill="#3f7fb4" stroke="#8cc6f0" stroke-width="1"/><circle cx="12.3" cy="25.7" r="5" fill="#8b929c" stroke="#c9cdd3" stroke-width="1"/><path d="M25 2L26.3 6.5L30.5 4L28.5 8.5L33 9.5L28.5 11L30.5 15L26.3 13L25 17L23.7 13L19.5 15L21.5 11L17 9.5L21.5 8.5L19.5 4L23.7 6.5Z" fill="#f6d24a"/></svg>
<span class="t" style="left:1369.00px;top:95px;font-size:11.6px;letter-spacing:0.188px;">Group</span>
<svg class="i" style="left:1410px;top:60px" width="18" height="18" viewBox="0 0 18 18" ><path d="M4 1.5H1.5V15.5H4M11 1.5H13.5V15.5H11" fill="none" stroke="#e1e4e8" stroke-width="1.1"/><rect x="4" y="3" width="5" height="4.5" fill="#4c6f94" stroke="#c9cdd3" stroke-width="0.8"/><circle cx="6.5" cy="12" r="2.6" fill="#8b929c" stroke="#c9cdd3" stroke-width="0.8"/><path d="M11 5L16.5 10.5M16.5 5L11 10.5" stroke="#e8404f" stroke-width="1.8"/></svg>
<svg class="i" style="left:1410px;top:84px" width="18" height="18" viewBox="0 0 18 18" ><path d="M4 1.5H1.5V15.5H4M11 1.5H13.5V15.5H11" fill="none" stroke="#e1e4e8" stroke-width="1.1"/><rect x="4" y="3" width="5" height="4.5" fill="#4c6f94" stroke="#c9cdd3" stroke-width="0.8"/><circle cx="6.5" cy="12" r="2.6" fill="#8b929c" stroke="#c9cdd3" stroke-width="0.8"/><path d="M14 7L17 9.5L11.5 16L8.5 16.8L9 13.6Z" fill="#f3c56b"/><path d="M14 7L17 9.5L15.8 11L12.8 8.5Z" fill="#e8505b"/></svg>
<div class="b" style="left:1406px;top:106px;width:24px;height:22px;background:#2f4d6c;border:1px solid #5aa0d8;box-sizing:border-box"></div>
<svg class="i" style="left:1410px;top:108px" width="18" height="18" viewBox="0 0 18 18" ><path d="M4 1.5H1.5V15.5H4M11 1.5H13.5V15.5H11" fill="none" stroke="#e1e4e8" stroke-width="1.1"/><rect x="4" y="3" width="5" height="4.5" fill="#3f9a6a" stroke="#c9cdd3" stroke-width="0.8"/><circle cx="6.5" cy="12" r="2.6" fill="#3f9a6a" stroke="#c9cdd3" stroke-width="0.8"/><path d="M10 7V16.5L12.3 14.2L14 18L15.6 17.2L14 13.6H17Z" fill="#ffffff" stroke="#2b323e" stroke-width="0.5"/></svg>
<svg class="i" style="left:1454px;top:71px" width="31" height="10" viewBox="0 0 31 10" ><rect x="0.5" y="1" width="29" height="7" fill="#f3c24a"/><path d="M3 1V4M6 1V3M9 1V4M12 1V3M15 1V4M18 1V3M21 1V4M24 1V3M27 1V4" stroke="#a8802a" stroke-width="0.9"/></svg>
<span class="t" style="left:1446.00px;top:95px;font-size:11.6px;letter-spacing:-0.021px;">Measure</span>
<i class="a" style="left:1464.5px;top:112px;border-top-color:#d8dce2"></i>
<svg class="i" style="left:1505px;top:60px" width="19" height="18" viewBox="0 0 19 18" ><path d="M2 3V14.5L4.8 11.8L7 16.5L9 15.5L7 11.2H10.8Z" fill="#ffffff"/><path d="M9.5 0.5L7 5.5H9.5L8.5 8.5L12.5 3.5H10Z" fill="#f6c24a"/><rect x="8.5" y="7.5" width="9.5" height="8.5" fill="#eef0f2"/><path d="M10 10H11M12 10H16.5M10 12H11M12 12H16.5M10 14H11M12 14H16.5" stroke="#3a7fc0" stroke-width="1"/></svg>
<svg class="i" style="left:1505px;top:84px" width="19" height="18" viewBox="0 0 19 18" ><rect x="1.5" y="1.5" width="13" height="13" fill="#2f6b55" stroke="#69d39d" stroke-width="1" stroke-dasharray="2 1.2"/><path d="M4 4H9V7H12V12H4Z" fill="#8fd8b0"/><path d="M9.5 5V15.5L12 13L14 17.5L15.8 16.6L13.8 12.4H17Z" fill="#ffffff" stroke="#2b323e" stroke-width="0.4"/></svg>
<svg class="i" style="left:1506px;top:108px" width="18" height="18" viewBox="0 0 18 18" ><rect x="2" y="1" width="12.5" height="16" rx="1" fill="#d5d8dd"/><rect x="4" y="3" width="8.5" height="3" fill="#3b4453"/><path d="M4 8.5H6M7.3 8.5H9.3M10.6 8.5H12.6M4 11.5H6M7.3 11.5H9.3M10.6 11.5H12.6M4 14.5H6M7.3 14.5H9.3M10.6 14.5H12.6" stroke="#3b4453" stroke-width="1.8"/></svg>
<svg class="i" style="left:1541px;top:58px" width="32" height="36" viewBox="0 0 32 36" ><rect x="2" y="4.5" width="22" height="27" rx="1.5" fill="#e0a155"/><rect x="8.5" y="1.5" width="9" height="5" rx="1.2" fill="#f1f2f4"/><path d="M10 12H24L30 18V34.5H10Z" fill="#e4e6ea"/><path d="M24 12V18H30Z" fill="#9aa1ab"/></svg>
<span class="t" style="left:1543.00px;top:95px;font-size:11.6px;letter-spacing:-0.409px;">Paste</span>
<i class="a" style="left:1553.5px;top:112px;border-top-color:#d8dce2"></i>
<svg class="i" style="left:1586px;top:60px" width="19" height="18" viewBox="0 0 19 18" ><rect x="1" y="1" width="11" height="11.5" fill="#c9cdd3"/><path d="M2.5 4H9M2.5 6.5H9M2.5 9H6" stroke="#3b4453" stroke-width="1.2"/><path d="M6.5 5L15 13.5M15.5 5.5L8.5 13" stroke="#f1f2f4" stroke-width="1.4"/><circle cx="8" cy="15" r="2" fill="none" stroke="#f1f2f4" stroke-width="1.2"/><circle cx="15.5" cy="15" r="2" fill="none" stroke="#f1f2f4" stroke-width="1.2"/></svg>
<i class="a" style="left:1607.5px;top:67px;border-top-color:#d8dce2"></i>
<svg class="i" style="left:1587px;top:84px" width="16" height="18" viewBox="0 0 16 18" ><path d="M1 1.5H7L10 4.5V13H1Z" fill="#aeb4bd"/><path d="M4.5 5H10.5L14 8.5V17H4.5Z" fill="#dfe2e6"/><path d="M10.5 5V8.5H14Z" fill="#8b929c"/></svg>
<i class="a" style="left:1607.5px;top:91px;border-top-color:#d8dce2"></i>
<svg class="i" style="left:1636px;top:64px" width="33" height="25" viewBox="0 0 33 25" ><path d="M0 0H14V10H32.5V24H0Z" fill="#e4e6ea"/></svg>
<span class="t" style="left:1640.00px;top:95px;font-size:11.6px;letter-spacing:-0.700px;">Base</span>
<i class="a" style="left:1648.5px;top:112px;border-top-color:#d8dce2"></i>
<div class="b" style="left:16px;top:160px;width:16px;height:2px;background:#e6e8ea;box-shadow:0 5px 0 #e6e8ea,0 10px 0 #e6e8ea"></div>
<svg class="i" style="left:41px;top:156px" width="9" height="20" viewBox="0 0 9 20" ><path d="M7 0.5L1.5 19.5" stroke="#3a414e" stroke-width="1.2"/></svg>
<svg class="i" style="left:91px;top:156px" width="9" height="20" viewBox="0 0 9 20" ><path d="M7 0.5L1.5 19.5" stroke="#3a414e" stroke-width="1.2"/></svg>
<svg class="i" style="left:336px;top:156px" width="9" height="20" viewBox="0 0 9 20" ><path d="M7 0.5L1.5 19.5" stroke="#3a414e" stroke-width="1.2"/></svg>
<svg class="i" style="left:647px;top:156px" width="9" height="20" viewBox="0 0 9 20" ><path d="M7 0.5L1.5 19.5" stroke="#3a414e" stroke-width="1.2"/></svg>
<span class="t" style="left:58.00px;top:158px;font-size:11.6px;letter-spacing:-0.119px;">Start</span>
<span class="t" style="left:106.00px;top:158px;font-size:11.6px;letter-spacing:0.056px;">Şarkı Söyleyen İnsan (PislikMimar.com)*</span>
<span class="t" style="left:353.00px;top:158px;font-size:11.6px;letter-spacing:0.203px;">Pisuar (PislikMimar.com)*</span>
<svg class="i" style="left:505px;top:153px" width="112" height="25" viewBox="0 0 112 25" ><path d="M13.5 1H107.5L98.5 25H4.5Z" fill="#3b4453"/><path d="M4.5 25L13.5 1H107.5" fill="none" stroke="#2b323e" stroke-width="1"/></svg>
<span class="t" style="left:526.00px;top:158px;font-size:11.6px;letter-spacing:0.285px;font-weight:bold;color:#f4f5f6;">Drawing7*</span>
<svg class="i" style="left:593px;top:161px" width="10" height="10" viewBox="0 0 10 10" ><path d="M1 1L9 9M9 1L1 9" stroke="#aeb4bd" stroke-width="1.8"/></svg>
<svg class="i" style="left:622px;top:158px" width="16" height="16" viewBox="0 0 16 16" ><path d="M8 0.5V15.5M0.5 8H15.5" stroke="#f4f5f6" stroke-width="1.8"/></svg>
<div class="b" style="left:16px;top:1017px;width:16px;height:2px;background:#e6e8ea;box-shadow:0 5px 0 #e6e8ea,0 10px 0 #e6e8ea"></div>
<svg class="i" style="left:40px;top:1014px" width="9" height="20" viewBox="0 0 9 20" ><path d="M7 0.5L1.5 19.5" stroke="#3a414e" stroke-width="1.2"/></svg>
<svg class="i" style="left:209px;top:1014px" width="9" height="20" viewBox="0 0 9 20" ><path d="M7 0.5L1.5 19.5" stroke="#3a414e" stroke-width="1.2"/></svg>
<span class="t" style="left:58.00px;top:1016px;font-size:11.6px;letter-spacing:0.598px;">Model</span>
<svg class="i" style="left:98px;top:1010px" width="80" height="25" viewBox="0 0 80 25" ><path d="M13 1H77L67 24H2.5Z" fill="#323a47"/></svg>
<span class="t" style="left:116.00px;top:1016px;font-size:11.6px;letter-spacing:-0.248px;font-weight:bold;color:#f4f5f6;">Layout1</span>
<svg class="i" style="left:185px;top:1015px" width="16" height="16" viewBox="0 0 16 16" ><path d="M8 0.5V15.5M0.5 8H15.5" stroke="#f4f5f6" stroke-width="1.8"/></svg>
<div class="b" style="left:1483px;top:1013px;width:40px;height:23px;background:#333b48"></div>
<span class="t" style="left:1486.00px;top:1018px;font-size:11px;line-height:15px;letter-spacing:-0.616px;color:#eceef0;">PAPER</span>
<div class="b" style="left:1526px;top:1013px;width:168px;height:23px;background:#333b48"></div>
<div class="b" style="left:1632px;top:1013px;width:22px;height:23px;background:#4f86c8"></div>
<div class="b" style="left:1656px;top:1013px;width:22px;height:23px;background:#4f86c8"></div>
<div class="b" style="left:1697px;top:1013px;width:74px;height:23px;background:#333b48"></div>
<div class="b" style="left:1773px;top:1013px;width:41px;height:23px;background:#333b48"></div>
<div class="b" style="left:1816px;top:1013px;width:24px;height:23px;background:#333b48"></div>
<div class="b" style="left:1842px;top:1013px;width:24px;height:23px;background:#333b48"></div>
<div class="b" style="left:1868px;top:1013px;width:24px;height:23px;background:#333b48"></div>
<div class="b" style="left:1894px;top:1013px;width:24px;height:23px;background:#333b48"></div>
<svg class="i" style="left:1530px;top:1017px" width="17" height="17" viewBox="0 0 17 17" ><path d="M2.5 0.5V14.5H16.5M2.5 9.5H7.5V14.5" fill="none" stroke="#e6e8ea" stroke-width="1.2"/></svg>
<svg class="i" style="left:1552px;top:1016px" width="19" height="18" viewBox="0 0 19 18" ><circle cx="8.5" cy="9.5" r="6.8" fill="none" stroke="#e6e8ea" stroke-width="1.2"/><path d="M8.5 9.5H18M8.5 9.5L15.5 1.5" stroke="#e6e8ea" stroke-width="1.2"/></svg>
<i class="a" style="left:1578.5px;top:1023px;border-top-color:#d8dce2"></i>
<svg class="i" style="left:1593px;top:1015px" width="17" height="20" viewBox="0 0 17 20" ><path d="M8.5 0.5V19" stroke="#e6e8ea" stroke-width="1.1"/><path d="M2 2.5L15 17.5" stroke="#e0505a" stroke-width="1.1"/><path d="M3 2L9 10" stroke="#4fc06a" stroke-width="1.1"/><rect x="7" y="8" width="3" height="3" fill="#e6e8ea"/></svg>
<i class="a" style="left:1618.5px;top:1023px;border-top-color:#d8dce2"></i>
<svg class="i" style="left:1634px;top:1016px" width="19" height="18" viewBox="0 0 19 18" ><path d="M1.5 16H17.5M1.5 16L16.5 3" stroke="#ffffff" stroke-width="1.5" fill="none"/><rect x="7.5" y="8.5" width="3" height="3" fill="#ffffff"/></svg>
<svg class="i" style="left:1658px;top:1016px" width="19" height="18" viewBox="0 0 19 18" ><rect x="4" y="4" width="12.5" height="12.5" fill="none" stroke="#ffffff" stroke-width="1.4"/><rect x="1.5" y="1.5" width="4.5" height="4.5" fill="#4f86c8" stroke="#ffffff" stroke-width="1.2"/></svg>
<i class="a" style="left:1683.5px;top:1023px;border-top-color:#d8dce2"></i>
<svg class="i" style="left:1700px;top:1015px" width="20" height="20" viewBox="0 0 20 20" ><rect x="2.5" y="3.5" width="15" height="14" fill="none" stroke="#e6e8ea" stroke-width="1.3" stroke-dasharray="3.5 2"/><rect x="7" y="8" width="7" height="6.5" fill="none" stroke="#e6e8ea" stroke-width="1.2"/><path d="M1 1L6 6M1 1H4.5M1 1V4.5" stroke="#e6e8ea" stroke-width="1.3" fill="none"/></svg>
<svg class="i" style="left:1725px;top:1015px" width="20" height="20" viewBox="0 0 20 20" ><path d="M8 0.5L1 17.5L8 12.5L15 17.5Z" fill="#e6e8ea"/><path d="M8 8L7 11H9Z" fill="#333b48"/><circle cx="15.5" cy="5" r="2.3" fill="none" stroke="#e6e8ea" stroke-width="1.1"/></svg>
<svg class="i" style="left:1749px;top:1015px" width="20" height="20" viewBox="0 0 20 20" ><path d="M8 0.5L1 17.5L8 12.5L15 17.5Z" fill="#e6e8ea"/><path d="M8 8L7 11H9Z" fill="#333b48"/><path d="M16 1L13 6H15.5L14 10L18.5 4.5H16Z" fill="#e6e8ea"/></svg>
<svg class="i" style="left:1776px;top:1015px" width="18" height="18" viewBox="0 0 18 18" ><path d="M14.00 9.00L17.50 9.00" stroke="#e6e8ea" stroke-width="3.2"/><path d="M12.54 12.54L15.01 15.01" stroke="#e6e8ea" stroke-width="3.2"/><path d="M9.00 14.00L9.00 17.50" stroke="#e6e8ea" stroke-width="3.2"/><path d="M5.46 12.54L2.99 15.01" stroke="#e6e8ea" stroke-width="3.2"/><path d="M4.00 9.00L0.50 9.00" stroke="#e6e8ea" stroke-width="3.2"/><path d="M5.46 5.46L2.99 2.99" stroke="#e6e8ea" stroke-width="3.2"/><path d="M9.00 4.00L9.00 0.50" stroke="#e6e8ea" stroke-width="3.2"/><path d="M12.54 5.46L15.01 2.99" stroke="#e6e8ea" stroke-width="3.2"/><circle cx="9" cy="9" r="4.6" fill="none" stroke="#e6e8ea" stroke-width="3"/></svg>
<i class="a" style="left:1801.5px;top:1023px;border-top-color:#d8dce2"></i>
<svg class="i" style="left:1818px;top:1016px" width="17" height="17" viewBox="0 0 17 17" ><path d="M8.5 0.5V16.5M0.5 8.5H16.5" stroke="#e6e8ea" stroke-width="1.8"/></svg>
<svg class="i" style="left:1845px;top:1016px" width="18" height="18" viewBox="0 0 18 18" ><rect x="1" y="1" width="6" height="6" fill="none" stroke="#e6e8ea" stroke-width="1.2"/><circle cx="13.5" cy="7" r="3" fill="none" stroke="#e6e8ea" stroke-width="1.2"/><path d="M6.5 9.5L10 16H3Z" fill="none" stroke="#e6e8ea" stroke-width="1.2"/></svg>
<svg class="i" style="left:1871px;top:1017px" width="19" height="15" viewBox="0 0 19 15" ><rect x="1" y="1" width="16.5" height="12.5" fill="none" stroke="#e6e8ea" stroke-width="1.3"/><path d="M4 10.5L7.5 7M4 10.5V7.5M4 10.5H7M14.5 3.5L11 7M14.5 3.5V6.5M14.5 3.5H11.5" stroke="#e6e8ea" stroke-width="1.1" fill="none"/></svg>
<div class="b" style="left:1898px;top:1017px;width:16px;height:2px;background:#e6e8ea;box-shadow:0 6px 0 #e6e8ea,0 12px 0 #e6e8ea"></div>
<svg class="i" style="left:16px;top:1052px" width="17" height="17" viewBox="0 0 17 17" ><path d="M0 2.4L7 1.4V8H0ZM8 1.25L16.5 0V8H8ZM0 9H7V15.6L0 14.6ZM8 9H16.5V17L8 15.75Z" fill="#ffffff"/></svg>
<div class="b" style="left:48px;top:1040px;width:288px;height:40px;background:#f3f3f3"></div>
<svg class="i" style="left:59px;top:1051px" width="19" height="19" viewBox="0 0 19 19" ><circle cx="11.5" cy="7" r="5.3" fill="none" stroke="#1b1c1e" stroke-width="1.4"/><path d="M7.8 11L1 17.5" stroke="#1b1c1e" stroke-width="1.5"/></svg>
<span class="t" style="left:88.00px;top:1051px;font-size:15.5px;line-height:19.5px;letter-spacing:-0.700px;color:#2a2a2a;">Ara</span>
<svg class="i" style="left:258px;top:1041px" width="78" height="39" viewBox="0 0 78 39" ><defs><clipPath id="bc"><rect x="0" y="0" width="78" height="39"/></clipPath>
<linearGradient id="sky" x1="0" y1="1" x2="1" y2="0"><stop offset="0" stop-color="#f3e6b4"/><stop offset="0.5" stop-color="#e6ecd6"/><stop offset="1" stop-color="#b5e0ee"/></linearGradient></defs><g clip-path="url(#bc)">
<ellipse cx="38.7" cy="22" rx="36.7" ry="21.2" fill="url(#sky)"/>
<ellipse cx="30" cy="29" rx="19" ry="8" fill="#f3e09a"/>
<path d="M7 31.7L9.5 20Q11 12 14.5 10.4L25.3 11.7L22 16.7Q18 20 17 22.5L15.3 30Z" fill="#b9a68c"/>
<path d="M14.5 10.4L25.3 11.7L22 13Z" fill="#3a2e25"/>
<path d="M9.5 30Q10 18 16 11.5M12.5 30Q13.5 20 20 13" stroke="#6b523c" stroke-width="0.9" fill="none"/>
<path d="M40.3 1.7L48.7 2.5Q55 6 57 11.7L59.5 30L53.7 24Q48 20 45.3 15.8L42.8 7.5Z" fill="#9b8b84"/>
<path d="M40.3 1.7L46 3L43.5 5Z" fill="#2e2620"/>
<path d="M44 6Q47 12 49.5 20M47 5Q51 12 53 22" stroke="#a8646a" stroke-width="1.6" fill="none"/>
<ellipse cx="47" cy="25" rx="10.5" ry="7" fill="#8a7f76"/>
<path d="M52 29L59 33L57.5 34.5L50 31Z" fill="#5c4a40"/>
<ellipse cx="28.7" cy="15.8" rx="5.8" ry="4.8" fill="#d2ccc2"/><circle cx="26.8" cy="15.3" r="1" fill="#1d1d1d"/>
<path d="M33 13.5L37 14.5L36.5 22L33 21Z" fill="#d9962e"/><path d="M31 21L35 21L34 24L31 23.5Z" fill="#c98a2a"/>
<ellipse cx="39.5" cy="27" rx="3" ry="2.6" fill="#c9a25a"/>
<path d="M0 39C4 33 12 34.5 20 34C28 32.5 38 34.5 48 33.5C58 32 68 34 76 39Z" fill="#5db336"/>
<path d="M4 39C12 35.5 20 37.5 28 36.5C36 35.5 46 38 54 36.5C62 35.5 70 37 76 39Z" fill="#3f9428"/></g></svg>
<svg class="i" style="left:351px;top:1048px" width="24" height="24" viewBox="0 0 24 24" ><circle cx="12" cy="12" r="12" fill="#ea4335"/><path d="M12 12L1.6 6A12 12 0 0 0 6 22.4Z" fill="#34a853"/><path d="M12 12L6 22.4A12 12 0 0 0 24 12Z" fill="#fbbc05"/><path d="M12 12H24A12 12 0 0 0 1.6 6Z" fill="#ea4335"/><path d="M1.6 6A12 12 0 0 0 6 22.4L12 12Z" fill="#34a853"/><path d="M24 12A12 12 0 0 1 6 22.4L12 12Z" fill="#fbbc05"/><circle cx="12" cy="12" r="5.6" fill="#ffffff"/><circle cx="12" cy="12" r="4.4" fill="#4285f4"/></svg>
<svg class="i" style="left:399px;top:1046px" width="26" height="27" viewBox="0 0 26 27" ><path d="M2 16C2 9 9 5 16 6C22 7 25 11 23 15C22 18 18 17 17 19C16 21 18 23 15 24C9 26 2 23 2 16Z" fill="#cfe6f5" stroke="#8fb8d6" stroke-width="0.8"/><circle cx="8" cy="13" r="2" fill="#e8505b"/><circle cx="12.5" cy="9.5" r="2" fill="#f6c24a"/><circle cx="18" cy="10" r="2" fill="#4fc06a"/><circle cx="7.5" cy="18.5" r="2" fill="#4a90e2"/><path d="M22 1L25 3L14 22L11.5 24L12 20.5Z" fill="#d98a3c"/><path d="M22 1L25 3L23.5 6L20.5 4Z" fill="#f3d59a"/></svg>
<div class="b" style="left:437px;top:1040px;width:45px;height:40px;background:#3c3d3f"></div>
<div class="b" style="left:484px;top:1044px;width:1px;height:36px;background:#3a3b3d"></div>
<svg class="i" style="left:449px;top:1046px" width="24" height="27" viewBox="0 0 24 27" ><path d="M2 3L6 1H22Q23 1 23 2V20L19 25H2Z" fill="#8e0f2a"/><path d="M2.5 3.5Q2.5 2.5 3.5 2.5H22.5V19.5H2.5Z" fill="#e51a4b"/><path d="M2.5 19.5H22.5L19.5 25.5H2.5Z" fill="#a3102f"/>
<text x="12.5" y="16.5" font-family="Liberation Sans, sans-serif" font-weight="bold" font-size="15" fill="#fff" text-anchor="middle">A</text>
<text x="12" y="24.3" font-family="Liberation Sans, sans-serif" font-weight="bold" font-size="5" fill="#fff" text-anchor="middle">CAD</text></svg>
<svg class="i" style="left:498px;top:1047px" width="24" height="26" viewBox="0 0 24 26" ><ellipse cx="12" cy="13" rx="11.5" ry="12.5" fill="#ff1b2d"/><ellipse cx="12" cy="13" rx="5.2" ry="9.3" fill="#1b1c1e"/></svg>
<div class="b" style="left:343px;top:1078px;width:40px;height:2px;background:#76b9ed"></div>
<div class="b" style="left:392px;top:1078px;width:40px;height:2px;background:#76b9ed"></div>
<div class="b" style="left:437px;top:1078px;width:47px;height:2px;background:#76b9ed"></div>
<div class="b" style="left:490px;top:1078px;width:40px;height:2px;background:#76b9ed"></div>
<svg class="i" style="left:1758px;top:1054px" width="15" height="10" viewBox="0 0 15 10" ><path d="M1.5 8.5L7.5 2.5L13.5 8.5" fill="none" stroke="#ffffff" stroke-width="1.3"/></svg>
<svg class="i" style="left:1780px;top:1051px" width="19" height="18" viewBox="0 0 19 18" ><path d="M1.5 6.5H4.5L8.5 2.5V15.5L4.5 11.5H1.5Z" fill="none" stroke="#ffffff" stroke-width="1.1"/><path d="M11 6.5Q12.5 9 11 11.5" fill="none" stroke="#ffffff" stroke-width="1"/><path d="M13 4.5Q15.8 9 13 13.5" fill="none" stroke="#9a9a9a" stroke-width="1"/><path d="M15.2 2.8Q18.8 9 15.2 15.2" fill="none" stroke="#6a6a6a" stroke-width="1"/></svg>
<span class="t" style="left:1820.00px;top:1043px;font-size:11.6px;letter-spacing:-0.514px;color:#ffffff;">06:16</span>
<span class="t" style="left:1807.00px;top:1061px;font-size:11.6px;letter-spacing:-0.451px;color:#ffffff;">17.04.2026</span>
<svg class="i" style="left:1878px;top:1051px" width="18" height="18" viewBox="0 0 18 18" ><path d="M1.5 1.5H16.5V12.5H11.5L9 15.5L6.5 12.5H1.5Z" fill="none" stroke="#ffffff" stroke-width="1.2"/></svg>
<div class="b" style="left:1914px;top:1040px;width:1px;height:40px;background:#5a5a5a"></div>
<svg class="i" style="left:0;top:182px" width="1920" height="825" viewBox="0 182 1920 825" fill="none" stroke="#141414" stroke-width="1.25" stroke-linejoin="round" stroke-linecap="round">
<defs>
<g id="pc" stroke-width="1.2">
<path d="M-35.3 -113.1H35.3M-36 -108.3H36M-37.3 -93.1H37.3M-35.3 -113.1L-36 -108.3L-37.3 -93.1M35.3 -113.1L36 -108.3L37.3 -93.1"/>
<path d="M-45.5 -91.5L-46.5 -9Q-46.6 -6.2 -44.5 -5.8L0 0L44.5 -5.8Q46.6 -6.2 46.5 -9L45.5 -91.5"/>
<path d="M-45.5 -91.5H-36.3V-21.4H-45.9M45.5 -91.5H36.3V-21.4H45.9"/>
<path d="M-46.1 -31.3H-36.3M-46.1 -27.8H-36.3M-46.1 -24.9H-36.3M46.1 -31.3H36.3M46.1 -27.8H36.3M46.1 -24.9H36.3"/>
<path d="M-45.5 -91.5L-43.8 -96.2Q-42.5 -98.3 -40.2 -97.1L-39.5 -91.5M-42 -97.5L-40 -102.5Q-39.3 -103.5 -38.6 -102.3L-37.3 -93.1M-41 -100L-38.2 -94"/>
<path d="M45.5 -91.5L43.8 -96.2Q42.5 -98.3 40.2 -97.1L39.5 -91.5M42 -97.5L40 -102.5Q39.3 -103.5 38.6 -102.3L37.3 -93.1M41 -100L38.2 -94"/>
</g>
<g id="ring" stroke-width="1.2"><circle r="47.9"/><circle r="45.4"/><circle r="42.9"/><circle r="40.4"/><circle r="36.2"/><circle r="6.3"/></g>
<g id="fc" vector-effect="non-scaling-stroke">
<path fill="#fff" d="M-162 57H175L183 150L190 370H222V450H218V590L225 600L217 612H-215L-222 600L-215 590V450H-217V370H-185L-175 150Z"/>
<path d="M-185 370L-187 450L-190 590M-217 450H-187M-215 590H-190L-200 608M190 370L188 450L192 590M222 450H188M218 590H192L202 608"/>
<path d="M-14 618L-22 650H27L19 618M-22 650V708H27V650M-12 708V725M15 708V725"/>
<path d="M-20 620L-46 660L-40 680L-32 664L-36 656L-14 622M24 620L50 660L44 680L36 664L40 656L18 622"/>
<rect x="-50" y="725" width="100" height="12"/>
<path d="M-12 737V975M13 737V975"/>
<path d="M-40 737V800Q-40 822 -62 830L-262 898Q-282 905 -282 925V975M-28 737V805Q-28 835 -55 843L-250 912Q-265 918 -265 935V975"/>
<path d="M-48 846L-160 905Q-178 912 -178 930V975M-12 848L-145 918Q-160 925 -160 940V975"/>
<g transform="scale(-1 1)"><path d="M-40 737V800Q-40 822 -62 830L-262 898Q-282 905 -282 925V975M-28 737V805Q-28 835 -55 843L-250 912Q-265 918 -265 935V975"/>
<path d="M-48 846L-160 905Q-178 912 -178 930V975M-12 848L-145 918Q-160 925 -160 940V975"/></g>
<path d="M-299 975H-271L-263 995L-275 1000M-299 975L-303 990"/><circle cx="-285" cy="1005" r="21" fill="#fff"/>
<path d="M-189 975H-161L-153 995L-165 1000M-189 975L-193 990"/><circle cx="-175" cy="1005" r="21" fill="#fff"/>
<path d="M-14 975H14L22 995L10 1000M-14 975L-18 990"/><circle cx="0" cy="1005" r="21" fill="#fff"/>
<path d="M161 975H189L197 995L185 1000M161 975L157 990"/><circle cx="175" cy="1005" r="21" fill="#fff"/>
<path d="M271 975H299L307 995L295 1000M271 975L267 990"/><circle cx="285" cy="1005" r="21" fill="#fff"/>
</g>
<g id="sc">
<path fill="#fff" d="M62 45C70 150 110 230 112 330C113 400 100 470 112 530C120 570 150 603 200 603L590 598C610 598 618 582 605 575C595 568 580 568 560 570L200 585C160 585 140 540 135 500C130 430 160 380 155 310C150 220 100 140 85 45Z"/>
<path d="M140 575L160 585"/>
<path fill="#fff" d="M165 440C170 410 260 370 380 362C420 360 430 390 438 430L455 510C460 525 480 520 495 515C510 515 505 535 495 545L470 568L448 570L422 440C415 400 410 372 375 375C270 385 190 420 182 447C175 450 165 448 165 440Z"/>
<path d="M305 603V668H410V600M305 655H410M330 668V700H385V668M305 713H410V727H305ZM340 700V713M375 700V713"/>
<path d="M320 727V800Q320 815 300 822L85 890Q60 898 60 920V970M340 727V815L95 910Q80 916 80 932V970"/>
<path d="M340 830L270 900Q258 912 258 930V970M360 842L288 912Q280 920 280 935V970M340 815V830M340 842H375"/>
<path d="M390 727V800Q390 815 410 822L585 888Q605 896 605 920V970M375 727V842M375 815L572 905Q585 912 585 930V970"/>
<path d="M47 970H80L85 985"/><circle cx="55" cy="998" r="22" fill="#fff"/>
<path d="M254 970H287L292 985"/><circle cx="262" cy="998" r="22" fill="#fff"/>
<path d="M592 970H625L630 985"/><circle cx="600" cy="998" r="22" fill="#fff"/>
</g>
</defs>
<rect x="137.5" y="511" width="627.5" height="187" stroke-width="1.1"/>
<use href="#pc" transform="translate(204 508.3)"/>
<use href="#pc" transform="translate(204 700.7) scale(1 -1)"/>
<use href="#pc" transform="translate(327.6 508.3)"/>
<use href="#pc" transform="translate(327.6 700.7) scale(1 -1)"/>
<use href="#pc" transform="translate(451.2 508.3)"/>
<use href="#pc" transform="translate(451.2 700.7) scale(1 -1)"/>
<use href="#pc" transform="translate(574.8 508.3)"/>
<use href="#pc" transform="translate(574.8 700.7) scale(1 -1)"/>
<use href="#pc" transform="translate(698.4 508.3)"/>
<use href="#pc" transform="translate(698.4 700.7) scale(1 -1)"/>
<use href="#pc" transform="translate(134.2 604.5) rotate(-90)"/>
<use href="#pc" transform="translate(768.3 604.5) rotate(90)"/>
<use href="#ring" transform="translate(259.5 604.5)"/>
<use href="#ring" transform="translate(449.7 604.5)"/>
<use href="#ring" transform="translate(639.9 604.5)"/>
<rect x="1118.4" y="556.6" width="627.8" height="10.2"/>
<path d="M1212.7 566.8V700H1269.3V566.8"/>
<path d="M1402.9 566.8V700H1459.5V566.8"/>
<path d="M1593.1000000000001 566.8V700H1649.7V566.8"/>
<g stroke-width="6.13">
<use href="#sc" transform="translate(990 490) scale(0.2038)"/>
<use href="#sc" transform="translate(1874 490) scale(-0.2038 0.2038)"/>
<use href="#fc" transform="translate(1184.4 490) scale(0.2038)"/>
<use href="#fc" transform="translate(1308.2 490) scale(0.2038)"/>
<use href="#fc" transform="translate(1432 490) scale(0.2038)"/>
<use href="#fc" transform="translate(1555.8 490) scale(0.2038)"/>
<use href="#fc" transform="translate(1679.6 490) scale(0.2038)"/>
</g>
<path d="M0 866H10" stroke="#4fd6e6" stroke-width="1"/>
</svg>
<svg class="i" style="left:1600px;top:182px" width="320" height="300" viewBox="1600 182 320 300">
<defs>
<linearGradient id="hg" x1="0" y1="0" x2="0" y2="1"><stop offset="0" stop-color="#ffe23a"/><stop offset="0.55" stop-color="#fdbf1a"/><stop offset="1" stop-color="#f08c10"/></linearGradient>
<linearGradient id="mg" x1="0" y1="0" x2="1" y2="1"><stop offset="0" stop-color="#f9c21c"/><stop offset="1" stop-color="#f2a40c"/></linearGradient>
<linearGradient id="bg" x1="0" y1="0" x2="0" y2="1"><stop offset="0" stop-color="#2f9bea"/><stop offset="1" stop-color="#1a78d2"/></linearGradient>
<linearGradient id="tg" x1="0" y1="0" x2="0" y2="1"><stop offset="0" stop-color="#2aa6e6"/><stop offset="1" stop-color="#1a63c4"/></linearGradient>
</defs>
<g transform="translate(1670 180) scale(0.22222)" stroke-linejoin="round" stroke-linecap="round">
<g fill="none" stroke="#ececec" stroke-width="34"><path d="M310 230L320 140L400 75L530 45L655 160L680 245L690 330L700 420L620 540L580 800L640 920L670 1010L590 945L480 810L340 930L215 980L280 850L370 790L420 530L290 420Z"/><path d="M55 740L880 425"/><path d="M825 285C960 320 995 360 965 520"/></g>
<g fill="#fff" stroke="#fff" stroke-width="26"><path d="M310 230L320 140L400 75L530 45L655 160L680 245L690 330L700 420L620 540L580 800L640 920L670 1010L590 945L480 810L340 930L215 980L280 850L370 790L420 530L290 420Z"/><path d="M55 740L880 425" stroke-width="60"/><path d="M825 285C850 300 860 320 900 325C960 320 995 360 985 410C975 450 965 470 965 520C965 560 930 560 930 520C930 490 900 480 890 450C875 410 860 380 850 340C845 310 830 300 825 285Z"/><path d="M680 260C720 220 770 230 800 275C780 300 770 330 770 370Z"/></g>
<path d="M375 785L490 805L360 880L345 935L270 925L285 850Z" fill="url(#bg)" stroke="#0c3f7c" stroke-width="6.5"/>
<path d="M470 805L585 795L645 915L585 945Z" fill="url(#bg)" stroke="#0c3f7c" stroke-width="6.5"/>
<path d="M215 978Q250 930 300 925L345 940Q330 975 300 985Z" fill="#1f86e0" stroke="#0c3f7c" stroke-width="6.5"/>
<path d="M590 945L642 925Q672 970 668 1012Q650 1022 638 1015Z" fill="#1f86e0" stroke="#0c3f7c" stroke-width="6.5"/>
<path d="M278 885L342 905L336 935L272 918Z" fill="#4a4a4e" stroke="#222" stroke-width="4"/><path d="M575 915L628 895L642 925L590 948Z" fill="#4a4a4e" stroke="#222" stroke-width="4"/>
<path d="M420 530L625 558L585 800L368 790Z" fill="url(#bg)" stroke="#0c3f7c" stroke-width="6.5"/>
<path d="M468 585L522 590L512 795L470 792Z" fill="#7d8794" stroke="#4a525e" stroke-width="4"/>
<path d="M368 768L585 785L583 812L366 795Z" fill="#5b626c" stroke="#2e3238" stroke-width="4"/>
<path d="M400 532L480 565L305 690L250 640Z" fill="url(#bg)" stroke="#0c3f7c" stroke-width="6.5"/>
<path d="M585 560L650 545L725 540L700 640Q660 665 610 640Z" fill="url(#bg)" stroke="#0c3f7c" stroke-width="6.5"/>
<path d="M615 555L650 575L660 545Z" fill="#fff"/>
<path d="M470 500L560 500L550 560L480 550Z" fill="#e9a878"/>
<path d="M68 736L880 425" stroke="#5e3210" stroke-width="42" fill="none"/><path d="M69 735L878 424" stroke="#a8652b" stroke-width="30" fill="none"/><path d="M70 727L875 417" stroke="#c98545" stroke-width="7" fill="none"/>
<path d="M205 680Q200 645 240 640L275 650Q300 665 290 695Q260 715 225 705Z" fill="#f8cfa0" stroke="#7a3f16" stroke-width="6.5"/>
<path d="M660 490Q670 465 705 470Q735 480 730 510L715 535Q685 540 668 525Z" fill="#f8cfa0" stroke="#7a3f16" stroke-width="6.5"/>
<path d="M825 285C850 300 860 320 900 325C960 320 995 360 985 410C975 450 965 470 965 520C965 560 930 560 930 520C930 490 900 480 890 450C875 410 860 380 850 340C845 310 830 300 825 285Z" fill="url(#mg)" stroke="#c98008" stroke-width="5"/>
<path d="M900 345Q950 340 965 385" fill="none" stroke="#fde27a" stroke-width="9"/>
<circle cx="688" cy="375" r="27" fill="#f2b482" stroke="#7a3f16" stroke-width="6.5"/>
<path d="M300 300Q280 420 350 490Q440 560 560 520Q680 470 690 330L680 290Z" fill="#f8c796" stroke="#7a3f16" stroke-width="6.5"/>
<path d="M640 325H676V400L640 385Z" fill="#f39a12" stroke="#c76a0a" stroke-width="4"/>
<ellipse cx="388" cy="345" rx="48" ry="32" fill="#fff" stroke="#2a2a2a" stroke-width="5"/><ellipse cx="548" cy="352" rx="48" ry="32" fill="#fff" stroke="#2a2a2a" stroke-width="5"/>
<circle cx="402" cy="345" r="19" fill="#3a9ad9"/><circle cx="540" cy="352" r="19" fill="#3a9ad9"/><circle cx="402" cy="345" r="8" fill="#123"/><circle cx="540" cy="352" r="8" fill="#123"/>
<path d="M430 400Q425 425 455 425" fill="none" stroke="#7a3f16" stroke-width="6.5"/><path d="M400 447Q470 490 545 432" fill="none" stroke="#6b3312" stroke-width="6"/><circle cx="462" cy="497" r="4" fill="#8a4b1f"/>
<path d="M312 235L318 140L345 165L400 75L420 120L530 45L540 85L585 58L600 105L645 100L655 160L682 190L680 250Z" fill="url(#hg)" stroke="#c76a0a" stroke-width="5"/>
<path d="M400 110L390 210M470 95L450 215M545 95L520 215M610 125L590 220" stroke="#f39a12" stroke-width="9" fill="none" opacity="0.7"/>
<path d="M680 258C720 215 775 225 802 272C775 262 745 262 720 285C760 290 775 330 770 372C755 335 735 310 690 305Z" fill="#3a3a3d" stroke="#1d1d1f" stroke-width="5"/>
<path d="M292 238Q480 262 680 242L692 322Q480 345 300 312Q280 280 292 238Z" fill="#3e3e42" stroke="#1d1d1f" stroke-width="5"/>
</g>
<g font-family="Liberation Sans, sans-serif" font-weight="bold" fill="url(#tg)" stroke="#2187d8" stroke-width="2.3" stroke-linejoin="round">
<text><tspan x="1632.2" y="437.0" rotate="-3" font-size="60.0" textLength="33.9" lengthAdjust="spacingAndGlyphs">P</tspan><tspan x="1667.9" y="450.0" rotate="-6" font-size="25.3" textLength="7.1" lengthAdjust="spacingAndGlyphs">i</tspan><tspan x="1680.1" y="454.4" rotate="-4" font-size="55.9" textLength="21.0" lengthAdjust="spacingAndGlyphs">s</tspan><tspan x="1708.1" y="459.0" rotate="-3" font-size="56.1" textLength="7.9" lengthAdjust="spacingAndGlyphs">l</tspan><tspan x="1723.5" y="460.0" rotate="-8" font-size="44.5" textLength="7.6" lengthAdjust="spacingAndGlyphs">i</tspan><tspan x="1731.0" y="460.4" rotate="3" font-size="46.2" textLength="30.2" lengthAdjust="spacingAndGlyphs">k</tspan><tspan x="1769.3" y="461.0" rotate="-5" font-size="55.7" textLength="43.9" lengthAdjust="spacingAndGlyphs">M</tspan><tspan x="1821.1" y="459.0" rotate="-14" font-size="23.1" textLength="7.2" lengthAdjust="spacingAndGlyphs">i</tspan><tspan x="1830.2" y="457.0" rotate="-13" font-size="26.1" textLength="46.0" lengthAdjust="spacingAndGlyphs">m</tspan><tspan x="1879.9" y="446.7" rotate="-14" font-size="30.2" textLength="32.6" lengthAdjust="spacingAndGlyphs">a</tspan><tspan x="1910.1" y="429.0" rotate="-18" font-size="31.0" textLength="16.6" lengthAdjust="spacingAndGlyphs">r</tspan></text>
</g>
<circle cx="1720.5" cy="431.5" r="2.3" fill="#7a7a7a"/><circle cx="1902" cy="471" r="0.8" fill="#444"/>
</svg>
<svg class="i" style="left:80px;top:770px" width="100" height="124" viewBox="80 770 100 124">
<defs>
<linearGradient id="dwb" x1="0" y1="0" x2="0.3" y2="1"><stop offset="0" stop-color="#1c4a82"/><stop offset="0.6" stop-color="#244f85"/><stop offset="1" stop-color="#3d6594"/></linearGradient>
<linearGradient id="dwy" x1="0" y1="0" x2="1" y2="0"><stop offset="0" stop-color="#fbe98e"/><stop offset="0.18" stop-color="#f9e068"/><stop offset="0.55" stop-color="#f5d02a"/><stop offset="0.88" stop-color="#f7dc55"/><stop offset="1" stop-color="#fdf3bf"/></linearGradient>
<linearGradient id="dwc" x1="0" y1="0" x2="1" y2="1"><stop offset="0" stop-color="#2c5590"/><stop offset="1" stop-color="#5d80b2"/></linearGradient>
</defs>
<path d="M84.3 834H174V889.8H84.3Z" fill="url(#dwy)"/>
<path d="M84.3 773H140Q150 773 152 781Q154 797 164 801Q174 804 174 815V855.2L112 835.2H84.3Z" fill="url(#dwb)"/>
<path d="M141 773.5Q150 776 151.5 784Q153 797 163 800.5Q170 802.5 172.5 807Z" fill="url(#dwc)"/>
<path d="M110.5 773V835M84.3 811.2H174" stroke="#ffffff" stroke-width="3" fill="none"/>
<rect x="100.8" y="801.3" width="20.4" height="20" fill="#2b4f80" stroke="#ffffff" stroke-width="2.6"/>
<rect x="109.3" y="809.8" width="2.8" height="2.8" fill="#ffffff"/>
<text x="107" y="882" font-family="Liberation Sans, sans-serif" font-weight="bold" font-size="27.5" fill="#0c0c0c" stroke="#0c0c0c" stroke-width="0.7">.dwg</text>
</svg>
<div class="b" style="left:9px;top:909px;width:233px;height:84px;border-radius:42px;background:linear-gradient(180deg,#e9151f 0%,#ee1c25 30%,#d92229 60%,#c1272d 100%);box-shadow:inset -2px 3px 3px -1px rgba(90,0,0,.75),inset 2px -1px 2px rgba(255,120,120,.25)"></div>
<span class="t" style="left:29px;top:934px;font-size:30.6px;line-height:36px;font-weight:bold;color:#fff;transform-origin:0 50%;transform:scaleX(0.745);letter-spacing:0;text-shadow:0 0 1px #fff">DOWNLOAD</span>
<svg class="i" style="left:172px;top:923px" width="58" height="58" viewBox="172 923 58 58">
<defs><radialGradient id="dlc" cx="0.42" cy="0.32" r="0.75"><stop offset="0" stop-color="#c9151f"/><stop offset="0.55" stop-color="#a80f18"/><stop offset="1" stop-color="#6e090e"/></radialGradient></defs>
<circle cx="200.3" cy="951.4" r="26.3" fill="#7a0a10" opacity="0.55"/>
<circle cx="200.1" cy="951.2" r="25" fill="url(#dlc)"/>
<path d="M193 933.2H206.2V952.1H213.4L199.4 970.6L185.4 952.1H193Z" fill="#ffffff"/>
</svg>
</body>
</html>
